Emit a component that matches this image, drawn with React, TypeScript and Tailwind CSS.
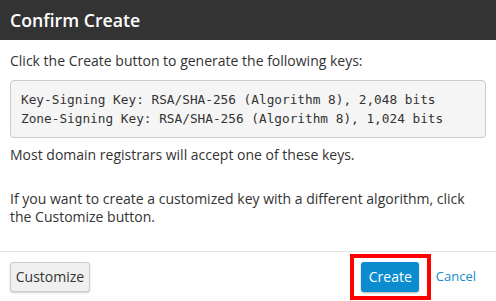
export default function App() {
  return (
    <div className="flex h-[301px] w-[496px] flex-col bg-white font-['Open_Sans',sans-serif] text-[#333]">
      <div className="flex h-[40px] items-center bg-[#333] px-[10px]">
        <h1 className="text-[17.7px] font-semibold text-white">Confirm Create</h1>
      </div>
      <div className="flex-1 px-[10px] pt-[12px] text-[14px] leading-[18px]">
        <p>Click the Create button to generate the following keys:</p>
        <pre className="mt-[10px] rounded-[4px] border border-[#ccc] bg-[#f5f5f5] px-[10px] py-[9px] font-['DejaVu_Sans_Mono',monospace] text-[12.75px] leading-[19px] text-[#333]">
          {'Key-Signing Key: RSA/SHA-256 (Algorithm 8), 2,048 bits\nZone-Signing Key: RSA/SHA-256 (Algorithm 8), 1,024 bits'}
        </pre>
        <p className="mt-[8px]">Most domain registrars will accept one of these keys.</p>
        <p className="mt-[26px]">If you want to create a customized key with a different algorithm, click the Customize button.</p>
      </div>
      <div className="flex h-[50px] items-center justify-between border-t border-[#e5e5e5] px-[10px]">
        <button className="h-[30px] w-[80px] rounded-[3px] border border-[#ccc] bg-[#f0f0f0] text-[14px] text-[#333] shadow-[0_1px_2px_rgba(0,0,0,0.2)]">Customize</button>
        <div className="flex items-center">
          <div className="flex h-[46px] w-[81px] items-center justify-center border-[4px] border-[#f00]">
            <button className="h-[30px] w-[58px] rounded-[3px] bg-[#0a8ccf] text-[14px] text-white shadow-[0_1px_2px_rgba(0,0,0,0.3)]">Create</button>
          </div>
          <a className="ml-[5px] mr-[10px] text-[13px] text-[#1a8acb]">Cancel</a>
        </div>
      </div>
    </div>
  );
}
